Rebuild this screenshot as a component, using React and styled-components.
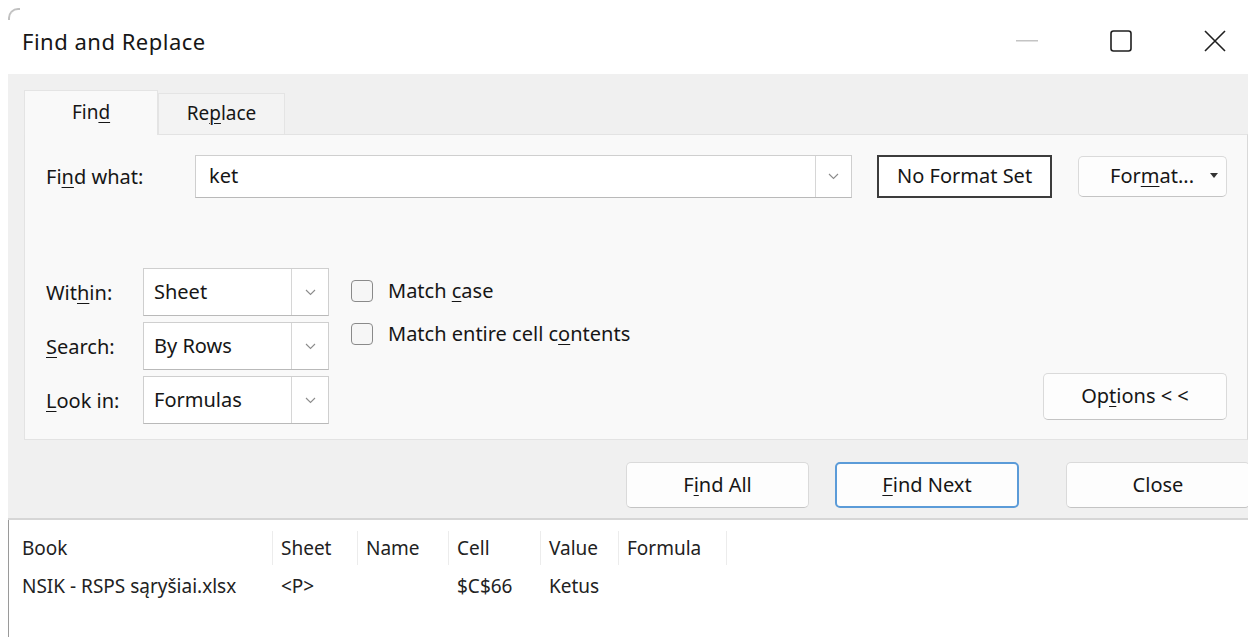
import React from 'react'
import styled, { createGlobalStyle, css } from 'styled-components'

const GlobalStyle = createGlobalStyle`
  html, body {
    margin: 0;
    padding: 0;
    background: #ffffff;
  }
  body {
    font-family: "Noto Sans", "Open Sans", sans-serif;
    color: #161616;
  }
`

const Window = styled.div`
  position: relative;
  width: 1248px;
  height: 637px;
  overflow: hidden;
  background: #ffffff;
  display: flex;
  flex-direction: column;

  &::before {
    content: '';
    position: absolute;
    left: 8px;
    top: 8px;
    width: 10px;
    height: 10px;
    border-left: 2px solid #a8a8a8;
    border-top: 2px solid #a8a8a8;
    border-top-left-radius: 10px;
    opacity: 0.7;
  }
`

const TitleBar = styled.div`
  height: 74px;
  display: flex;
  align-items: center;
  padding: 12px 0 0 22px;
  box-sizing: border-box;
`

const Title = styled.div`
  flex: 1;
  font-size: 22px;
  letter-spacing: 0.5px;
  padding-bottom: 4px;
`

const Controls = styled.div`
  display: flex;
  height: 100%;
  margin-right: -14px;
`

const ControlButton = styled.div`
  width: 94px;
  height: 100%;
  display: flex;
  align-items: center;
  justify-content: center;
  padding-bottom: 4px;
  box-sizing: border-box;
`

const Shell = styled.div`
  margin-left: 8px;
  background: #f0f0f0;
  height: 446px;
  padding: 16px 0 0 16px;
  box-sizing: border-box;
  border-bottom: 2px solid #d6d6d6;
  display: flex;
  flex-direction: column;
`

const TabRow = styled.div`
  display: flex;
  align-items: flex-end;
  height: 44px;
`

const Tab = styled.div`
  height: ${p => (p.$active ? 45 : 41)}px;
  width: ${p => p.$w}px;
  box-sizing: border-box;
  display: flex;
  align-items: center;
  justify-content: center;
  font-size: 19px;
  background: ${p => (p.$active ? '#f9f9f9' : '#f3f3f3')};
  border: 1px solid #e4e4e4;
  border-bottom: none;
  margin-bottom: ${p => (p.$active ? -1 : 0)}px;
  position: relative;
  z-index: ${p => (p.$active ? 1 : 0)};
  padding-bottom: 2px;
`

const Panel = styled.div`
  height: 306px;
  background: #f9f9f9;
  border: 1px solid #e3e3e3;
  border-right: 1px solid #d9d9d9;
  box-sizing: border-box;
  padding: 20px 20px 0 21px;
  display: flex;
  flex-direction: column;
`

const FindRow = styled.div`
  display: flex;
  align-items: center;
  height: 43px;
`

const Label = styled.div`
  font-size: 20px;
  width: ${p => p.$w}px;
  flex-shrink: 0;
`

const Key = styled.span`
  text-decoration: underline;
  text-underline-offset: 3px;
  text-decoration-thickness: 1px;
`

const Combo = styled.div`
  display: flex;
  width: ${p => p.$w}px;
  height: ${p => p.$h}px;
  box-sizing: border-box;
  background: #ffffff;
  border: 1px solid #cfcfcf;
  border-bottom-color: #b9b9b9;
`

const ComboText = styled.div`
  flex: 1;
  display: flex;
  align-items: center;
  padding-left: ${p => p.$pad || 10}px;
  font-size: 20px;
  padding-bottom: 2px;
`

const ComboArrow = styled.div`
  width: ${p => p.$w || 35}px;
  border-left: 1px solid #d6d6d6;
  display: flex;
  align-items: center;
  justify-content: center;
  background: #ffffff;
`

const FormatPreview = styled.div`
  margin-left: 25px;
  width: 175px;
  height: 43px;
  box-sizing: border-box;
  border: 2px solid #3c3c3c;
  background: #ffffff;
  display: flex;
  align-items: center;
  justify-content: center;
  font-size: 20px;
  padding-bottom: 2px;
`

const buttonBase = css`
  box-sizing: border-box;
  background: #fdfdfd;
  border: 1px solid #dadada;
  border-bottom-color: #c4c4c4;
  border-radius: 5px;
  display: flex;
  align-items: center;
  justify-content: center;
  font-size: 20px;
  padding-bottom: 2px;
  flex-shrink: 0;
`

const Button = styled.div`
  ${buttonBase};
  width: ${p => p.$w}px;
  height: ${p => p.$h || 46}px;
  margin-left: ${p => p.$gap || 0}px;
  margin-bottom: ${p => p.$lift || 0}px;
  ${p =>
    p.$default &&
    css`
      border: 2px solid #5b9bd8;
    `}
`

const FormatButton = styled.div`
  ${buttonBase};
  margin-left: 26px;
  width: 149px;
  height: 41px;
  justify-content: flex-end;
  padding-right: 8px;
  gap: 16px;
`

const OptionsArea = styled.div`
  display: flex;
  margin-top: 70px;
`

const Selects = styled.div`
  display: flex;
  flex-direction: column;
  gap: 6px;
`

const SelectRow = styled.div`
  display: flex;
  align-items: center;
`

const Checks = styled.div`
  display: flex;
  flex-direction: column;
  gap: 16px;
  margin-left: 22px;
  padding-top: 9px;
`

const CheckRow = styled.label`
  display: flex;
  align-items: center;
  gap: 15px;
  font-size: 20px;
`

const Box = styled.span`
  width: 20px;
  height: 20px;
  border: 1px solid #8a8a8a;
  border-radius: 4px;
  background: #f6f6f6;
  flex-shrink: 0;
`

const OptionsCol = styled.div`
  flex: 1;
  display: flex;
  justify-content: flex-end;
  align-items: flex-end;
`

const ActionRow = styled.div`
  display: flex;
  margin-top: 22px;
  margin-left: 602px;
`

const Results = styled.div`
  flex: 1;
  margin-left: 8px;
  border-left: 1px solid #9a9a9a;
  padding-top: 11px;
`

const Grid = styled.div`
  display: grid;
  grid-template-columns: 264px 85px 91px 92px 78px 108px;
  font-size: 19px;
`

const HeadCell = styled.div`
  height: 34px;
  display: flex;
  align-items: center;
  padding-left: ${p => (p.$first ? 13 : 8)}px;
  border-right: 1px solid #ececec;
  color: #222;
`

const Cell = styled.div`
  height: 42px;
  display: flex;
  align-items: center;
  padding-left: ${p => (p.$first ? 13 : 8)}px;
  white-space: nowrap;
  color: #222;
`

const Chevron = () => (
  <svg width="11" height="7" viewBox="0 0 11 7">
    <path d="M1 1 L5.5 5.5 L10 1" fill="none" stroke="#8c8c8c" strokeWidth="1.1" />
  </svg>
)

const Caret = () => (
  <svg width="8" height="5" viewBox="0 0 8 5">
    <path d="M0 0 H8 L4 5 Z" fill="#333" />
  </svg>
)

const Select = ({ value }) => (
  <Combo $w={186} $h={48}>
    <ComboText>{value}</ComboText>
    <ComboArrow $w={36}>
      <Chevron />
    </ComboArrow>
  </Combo>
)

const columns = ['Book', 'Sheet', 'Name', 'Cell', 'Value', 'Formula']
const rows = [['NSIK - RSPS sąryšiai.xlsx', '<P>', '', '$C$66', 'Ketus', '']]

const App = () => {
  return (
    <Window>
      <GlobalStyle />
      <TitleBar>
        <Title>Find and Replace</Title>
        <Controls>
          <ControlButton>
            <svg width="22" height="2" viewBox="0 0 22 2">
              <rect width="22" height="1.5" fill="#c4c4c4" />
            </svg>
          </ControlButton>
          <ControlButton>
            <svg width="22" height="22" viewBox="0 0 22 22">
              <rect x="1" y="1" width="20" height="20" rx="2.5" fill="none" stroke="#1f1f1f" strokeWidth="1.6" />
            </svg>
          </ControlButton>
          <ControlButton>
            <svg width="22" height="22" viewBox="0 0 22 22">
              <path d="M1 1 L21 21 M21 1 L1 21" stroke="#1f1f1f" strokeWidth="1.6" />
            </svg>
          </ControlButton>
        </Controls>
      </TitleBar>

      <Shell>
        <TabRow>
          <Tab $active $w={134}>
            <span>Fin<Key>d</Key></span>
          </Tab>
          <Tab $w={127}>
            <span>Re<Key>p</Key>lace</span>
          </Tab>
        </TabRow>
        <Panel>
          <FindRow>
            <Label $w={149}>Fi<Key>n</Key>d what:</Label>
            <Combo $w={658} $h={43}>
              <ComboText $pad={13}>ket</ComboText>
              <ComboArrow>
                <Chevron />
              </ComboArrow>
            </Combo>
            <FormatPreview>No Format Set</FormatPreview>
            <FormatButton>
              <span>For<Key>m</Key>at...</span>
              <Caret />
            </FormatButton>
          </FindRow>

          <OptionsArea>
            <Selects>
              <SelectRow>
                <Label $w={97}>Wit<Key>h</Key>in:</Label>
                <Select value="Sheet" />
              </SelectRow>
              <SelectRow>
                <Label $w={97}><Key>S</Key>earch:</Label>
                <Select value="By Rows" />
              </SelectRow>
              <SelectRow>
                <Label $w={97}><Key>L</Key>ook in:</Label>
                <Select value="Formulas" />
              </SelectRow>
            </Selects>
            <Checks>
              <CheckRow>
                <Box />
                <span>Match <Key>c</Key>ase</span>
              </CheckRow>
              <CheckRow>
                <Box />
                <span>Match entire cell c<Key>o</Key>ntents</span>
              </CheckRow>
            </Checks>
            <OptionsCol>
              <Button $w={184} $h={47} $lift={4}>
                <span>Op<Key>t</Key>ions &lt; &lt;</span>
              </Button>
            </OptionsCol>
          </OptionsArea>
        </Panel>

        <ActionRow>
          <Button $w={183}>
            <span>F<Key>i</Key>nd All</span>
          </Button>
          <Button $w={184} $gap={26} $default>
            <span><Key>F</Key>ind Next</span>
          </Button>
          <Button $w={184} $gap={47}>
            <span>Close</span>
          </Button>
        </ActionRow>
      </Shell>

      <Results>
        <Grid>
          {columns.map((c, i) => (
            <HeadCell key={c} $first={i === 0}>{c}</HeadCell>
          ))}
          {rows.map(r =>
            r.map((v, i) => (
              <Cell key={i} $first={i === 0}>{v}</Cell>
            ))
          )}
        </Grid>
      </Results>
    </Window>
  )
}

export default App
